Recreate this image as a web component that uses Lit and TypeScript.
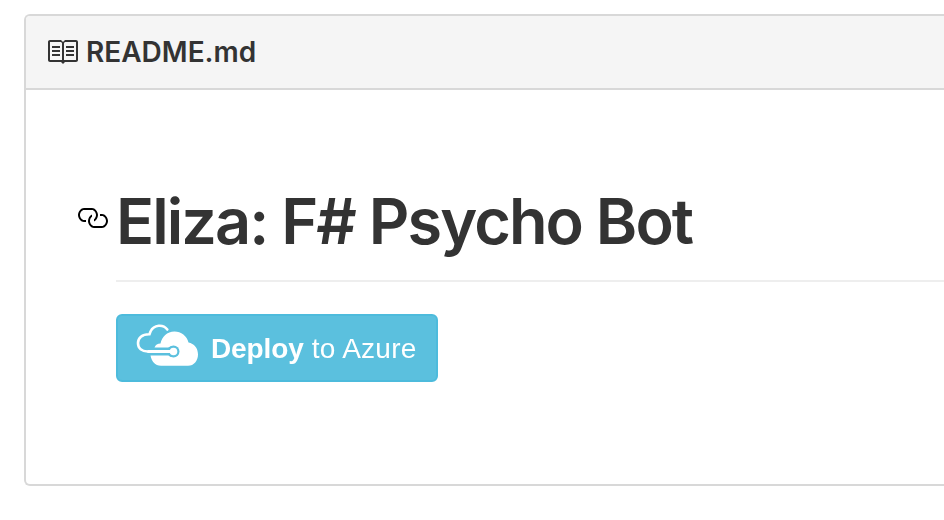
import { LitElement, html, css } from "lit";
import { customElement } from "lit/decorators.js";

@customElement("deploy-button")
class DeployButton extends LitElement {
  static styles = css`
    :host { display: block; }
    .button {
      box-sizing: border-box;
      display: flex;
      align-items: center;
      width: 322px;
      height: 68px;
      padding-left: 18px;
      border: 2px solid #4dbbdc;
      border-radius: 6px;
      background: #5bc0de;
      color: #fff;
      font: 28px/64px "Liberation Sans", Arial, sans-serif;
      white-space: pre;
    }
    .cloud { width: 64px; height: 44px; flex: none; margin: 0 11px 8px 0; filter: blur(0.6px); }
    .label { display: block; margin-top: 2px; filter: blur(0.7px); letter-spacing: 0.25px; }
    .strong { letter-spacing: -0.1px; }
  `;
  render() {
    return html`<div class="button">
      <svg class="cloud" viewBox="136 322 64 44">
        <path fill="none" stroke="#fff" stroke-width="2.6" stroke-linecap="round" d="M167.300 329.500C163 324 154 324.500 150.500 331.500L149.500 334.200C142 334 138 338 138 343C138 348.500 142 351.500 147.500 351.500H169" />
        <path fill="#fff" d="M154.500 347.500H168.500A5.500 5.500 0 1 1 168.500 355.500H150.500C151.500 361 155 365.800 161 365.800H188C194 365.800 198 360.500 198 354.500C198 348 194 343.500 188.500 342.500C187 336 181 331.500 174.500 331.500C167 331.500 162 336.500 160.500 343.500C157.500 343.500 155.500 345 154.500 347.500Z" />
        <circle cx="173.500" cy="351.500" r="6" fill="#5bc0de" />
        <circle cx="173.500" cy="351.500" r="3.800" fill="#fff" />
        <path d="M147.500 351.500H172" stroke="#fff" stroke-width="3" />
      </svg>
      <span class="label"><b class="strong">Deploy</b> to Azure</span>
    </div>`;
  }
}

@customElement("app-root")
class AppRoot extends LitElement {
  static styles = css`
    :host {
      display: block;
      box-sizing: border-box;
      height: 520px;
      padding: 14px 0 0 24px;
      overflow: hidden;
      background: #fff;
      color: #333;
      font-family: Inter, "Liberation Sans", sans-serif;
    }
    .file {
      box-sizing: border-box;
      height: 472px;
      border: 2px solid #d8d8d8;
      border-right: 0;
      border-radius: 6px 0 0 6px;
      overflow: hidden;
    }
    .header {
      box-sizing: border-box;
      display: flex;
      align-items: center;
      height: 74px;
      padding-left: 20px;
      border-bottom: 2px solid #d8d8d8;
      background: #f5f5f5;
    }
    .icon { width: 32px; height: 32px; flex: none; fill: currentColor; }
    .name { margin: 0 0 0 8px; font-size: 28px; font-weight: 600; line-height: 36px; }
    .body { padding: 90px 0 0 50px; }
    .title { display: flex; }
    .link { margin-top: 22px; color: #000; }
    .heading {
      box-sizing: border-box;
      flex: 1;
      height: 102px;
      margin: 0 0 0 8px;
      border-bottom: 2px solid #eee;
      font-size: 63px;
      font-weight: 600;
      line-height: 82px;
      letter-spacing: -1.95px;
      white-space: nowrap;
    }
    .deploy { margin: 32px 0 0 40px; }
  `;
  render() {
    return html`<section class="file">
      <header class="header">
        <svg class="icon" viewBox="0 0 16 16"><path d="M3 5h4v1H3V5zm0 3h4V7H3v1zm0 2h4V9H3v1zm11-5h-4v1h4V5zm0 2h-4v1h4V7zm0 2h-4v1h4V9zm2-6v9c0 .55-.45 1-1 1H9.500l-1 1-1-1H2c-.55 0-1-.45-1-1V3c0-.55.45-1 1-1h5.500l1 1 1-1H15c.55 0 1 .45 1 1zm-8 .5L7.500 3H2v9h6V3.500zm7-.5H9.500l-.5.5V12h6V3z" /></svg>
        <h3 class="name">README.md</h3>
      </header>
      <article class="body">
        <div class="title">
          <svg class="icon link" viewBox="0 0 16 16"><path d="M4 9h1v1H4c-1.500 0-3-1.690-3-3.500S2.550 3 4 3h4c1.450 0 3 1.690 3 3.500 0 1.410-.91 2.720-2 3.250V8.590c.58-.45 1-1.270 1-2.090C10 5.280 8.980 4 8 4H4c-.98 0-2 1.220-2 2.500S3 9 4 9zm9-3h-1v1h1c1 0 2 1.220 2 2.500S13.980 12 13 12H9c-.98 0-2-1.220-2-2.500 0-.83.42-1.640 1-2.090V6.250c-1.090.53-2 1.840-2 3.250C6 11.310 7.550 13 9 13h4c1.450 0 3-1.690 3-3.500S14.500 6 13 6z" /></svg>
          <h1 class="heading">Eliza: F# Psycho Bot</h1>
        </div>
        <deploy-button class="deploy"></deploy-button>
      </article>
    </section>`;
  }
}
